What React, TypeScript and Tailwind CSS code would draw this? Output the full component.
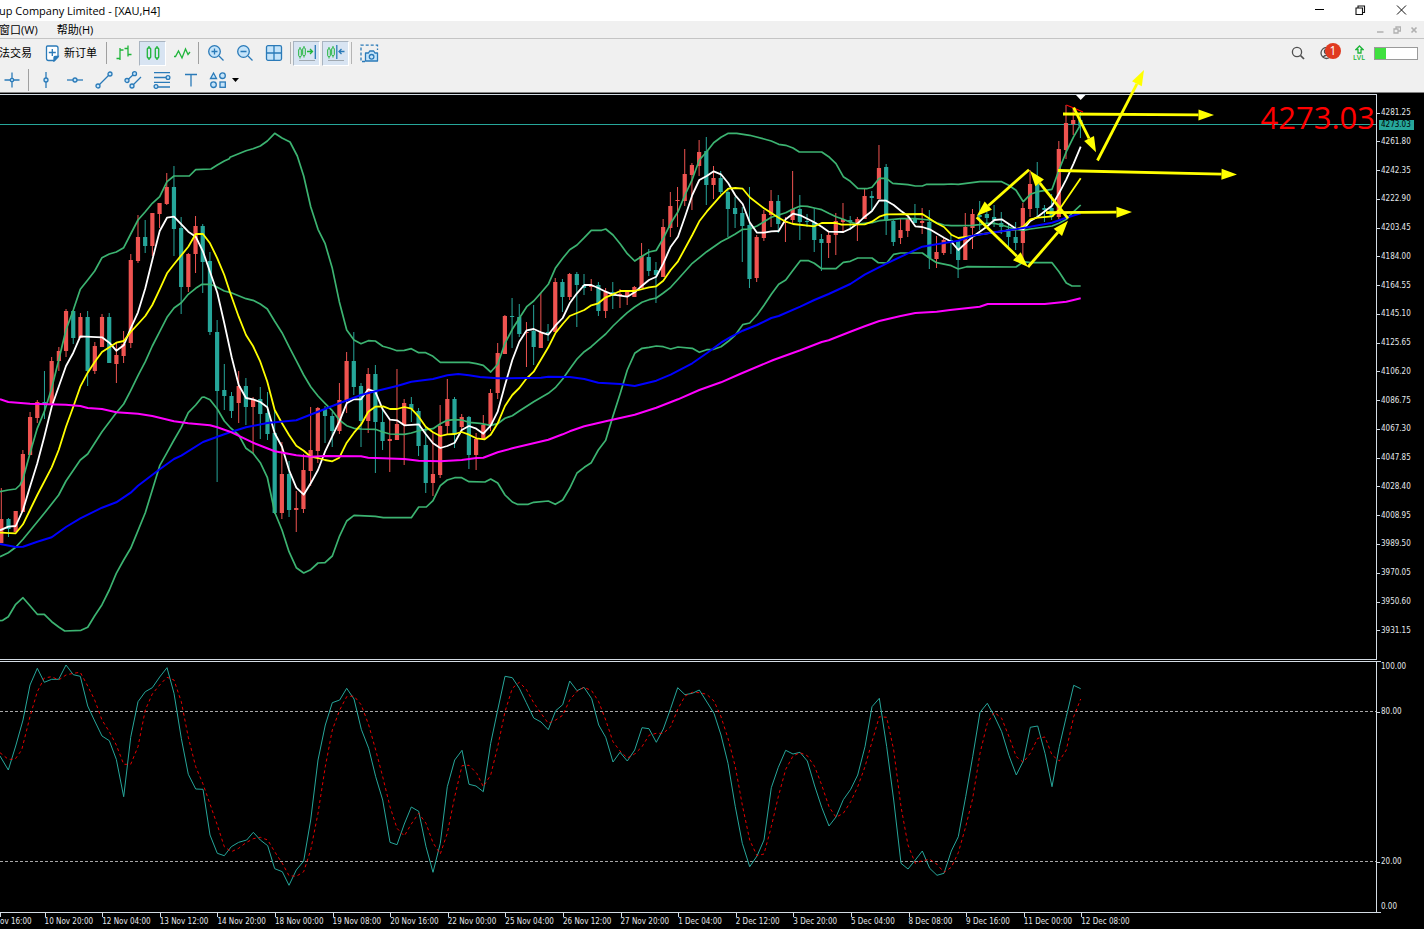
import React from "react";

/* ---------- chart data ---------- */

const PLOT_W = 1376;
const FIRST_X = 1.3;
const STEP = 7.194;

type Candle = [high: number, top: number, bottom: number, low: number, up: 0 | 1];

const candles: Candle[] = [
  [488, 519, 543, 543, 1], [518, 519, 529, 537, 0], [511, 511, 532, 532, 1], [450, 454, 512, 512, 1],
  [412, 417, 455, 455, 1], [400, 402, 418, 423, 1], [371, 402, 404, 419, 0], [357, 361, 404, 404, 1],
  [347, 351, 361, 371, 1], [309, 311, 351, 357, 1], [310, 311, 338, 344, 0], [313, 317, 338, 338, 1],
  [311, 317, 371, 386, 0], [342, 346, 371, 374, 1], [314, 317, 347, 347, 1], [313, 317, 363, 363, 0],
  [343, 355, 364, 383, 1], [331, 344, 356, 363, 1], [254, 260, 343, 348, 1], [215, 237, 261, 263, 1],
  [220, 237, 246, 253, 0], [213, 213, 246, 256, 1], [203, 203, 214, 228, 1], [173, 187, 204, 205, 1],
  [166, 187, 229, 256, 0], [217, 228, 287, 314, 0], [253, 254, 287, 292, 1], [216, 226, 254, 273, 1],
  [224, 226, 262, 293, 0], [252, 261, 332, 335, 0], [320, 332, 391, 482, 0], [364, 390, 396, 410, 0],
  [392, 396, 411, 418, 0], [371, 386, 403, 423, 1], [378, 386, 407, 425, 0], [397, 399, 407, 453, 1],
  [387, 399, 414, 439, 0], [392, 413, 434, 440, 0], [410, 433, 513, 514, 0], [442, 474, 513, 519, 1],
  [461, 474, 510, 517, 0], [491, 508, 510, 532, 1], [454, 470, 509, 513, 1], [407, 450, 471, 486, 1],
  [407, 408, 451, 463, 1], [406, 409, 416, 443, 0], [412, 416, 431, 447, 0], [383, 400, 431, 434, 1],
  [352, 361, 400, 413, 1], [332, 361, 387, 395, 0], [383, 386, 421, 447, 0], [368, 374, 421, 433, 1],
  [365, 374, 422, 473, 0], [410, 422, 441, 450, 0], [420, 439, 441, 472, 1], [369, 424, 440, 440, 1],
  [399, 403, 425, 465, 1], [397, 404, 409, 422, 0], [408, 411, 446, 456, 0], [427, 445, 483, 493, 0],
  [433, 474, 483, 496, 1], [405, 426, 475, 478, 1], [379, 399, 426, 435, 1], [397, 399, 435, 448, 0],
  [414, 417, 427, 433, 1], [416, 417, 455, 469, 0], [433, 439, 455, 470, 1], [415, 425, 439, 439, 1],
  [389, 393, 426, 431, 1], [343, 353, 393, 399, 1], [315, 316, 354, 354, 1], [298, 316, 317, 348, 0],
  [304, 317, 334, 337, 0], [322, 332, 333, 367, 1], [305, 331, 347, 365, 0], [293, 332, 348, 348, 1],
  [324, 332, 333, 341, 0], [278, 282, 332, 332, 1], [279, 282, 297, 312, 0], [273, 274, 297, 300, 1],
  [272, 274, 285, 327, 0], [274, 285, 288, 295, 0], [279, 285, 287, 291, 1], [282, 285, 311, 316, 0],
  [288, 292, 311, 318, 1], [282, 292, 296, 309, 0], [289, 294, 296, 308, 1], [291, 292, 297, 305, 1],
  [286, 287, 297, 297, 1], [243, 256, 288, 288, 1], [249, 257, 271, 276, 0], [262, 270, 275, 303, 0],
  [219, 227, 277, 277, 1], [192, 206, 228, 237, 1], [187, 200, 201, 227, 1], [149, 174, 201, 206, 1],
  [163, 165, 175, 210, 1], [140, 152, 166, 176, 1], [137, 151, 185, 205, 0], [166, 178, 185, 199, 1],
  [171, 178, 192, 194, 0], [188, 192, 209, 237, 0], [197, 208, 214, 228, 0], [207, 213, 226, 262, 0],
  [187, 225, 279, 288, 0], [235, 237, 278, 282, 1], [210, 214, 238, 241, 1], [190, 201, 215, 227, 1],
  [195, 201, 224, 233, 0], [217, 221, 223, 242, 1], [171, 209, 220, 223, 1], [195, 209, 222, 240, 0],
  [214, 221, 222, 227, 0], [208, 222, 240, 252, 0], [234, 239, 243, 271, 0], [232, 235, 243, 258, 1],
  [213, 221, 235, 255, 1], [203, 219, 222, 233, 1], [216, 220, 222, 230, 0], [217, 219, 223, 241, 1],
  [189, 196, 219, 219, 1], [191, 196, 198, 210, 0], [145, 168, 199, 199, 1], [164, 167, 221, 235, 0],
  [220, 221, 242, 246, 0], [219, 230, 238, 244, 1], [217, 219, 231, 237, 1], [204, 218, 223, 223, 0],
  [208, 221, 223, 234, 1], [210, 222, 258, 269, 0], [236, 252, 259, 268, 1], [238, 240, 253, 255, 1],
  [235, 240, 241, 254, 0], [240, 241, 260, 278, 0], [213, 227, 260, 260, 1], [209, 214, 228, 249, 1],
  [201, 215, 217, 230, 0], [212, 214, 218, 223, 0], [205, 217, 220, 227, 0], [212, 223, 227, 234, 0],
  [224, 229, 237, 247, 0], [222, 237, 243, 250, 0], [203, 208, 243, 260, 1], [170, 184, 209, 217, 1],
  [162, 184, 208, 217, 0], [205, 208, 210, 222, 0], [194, 208, 217, 220, 0], [141, 149, 217, 219, 1],
  [105, 123, 150, 159, 1], [108, 120, 124, 135, 1], [112, 120, 126, 138, 0],
];

/* A series is stored as chunks: an origin, then "x,y" offsets in thirds of a unit. */
type Chunk = [ox: number, oy: number, offsets: string];

function points(chunks: Chunk[]): string {
  return chunks
    .map(([ox, oy, offsets]) =>
      offsets
        .split(" ")
        .map((pair) => {
          const [x, y] = pair.split(",").map(Number);
          return `${(ox + x / 3).toFixed(1)},${(oy + y / 3).toFixed(1)}`;
        })
        .join(" ")
    )
    .join(" ");
}

const upperBand: Chunk[] = [
  [0, 260, "0,695 25,690 47,687 60,675 69,657 90,580 112,505 133,455 155,385 176,300"],
  [0, 130, "198,600 220,540 241,478 263,450 284,423 306,383 328,372 349,366 371,353 392,312 414,270 436,245 457,220 479,200 501,155 522,138 568,138 587,119 633,117 652,105 673,93 688,86"],
  [230, 120, "0,112 48,92 69,86 91,78 112,63 134,40 156,54 180,66 202,108 221,168 242,260 264,328 285,370 307,445 328,545 350,630 372,660 393,671 415,662 436,663 458,679 480,685 501,692 523,691 544,686 566,698 587,698 609,709 631,727 717,727 739,731"],
  [480, 120, "10,736 32,756 53,733 75,670 97,628 118,595 140,560 161,543 183,518 205,493 226,445 248,415 269,389 291,375 313,353 334,331 365,331 377,327 399,345 421,372 442,401 464,423 486,409 507,396 529,391 550,355 572,310 594,275 615,225 637,178 658,120 680,95 701,68 723,52 745,40"],
  [730, 120, "20,40 59,46 102,57 124,63 146,73 167,76 189,84 208,96 275,96 296,110 318,131 340,170 361,184 383,205 410,206 426,202 448,175 469,175 488,190 534,194 556,198 577,198 590,193 642,193 664,192"],
  [950, 90, "25,283 89,275 155,275 176,286 198,301 220,335 241,313 263,305 306,298 327,240 349,185 371,140 392,103"],
];

const middleBand: Chunk[] = [
  [0, 260, "0,890 25,878 47,862 69,838 90,812 133,760 176,705 198,663 241,600 263,582 306,515 349,458"],
  [0, 130, "371,822 392,782 414,737 436,695 457,648 479,605 501,562 522,534 544,518 565,493 587,475 606,463 630,463 645,468 673,483"],
  [230, 120, "0,517 48,536 69,541 91,552 112,567 134,604 156,638 177,680 199,722 221,765 242,800 264,828 285,850 307,872 328,900 350,917 372,925 393,927 436,928 458,936 480,942 523,943 544,939 566,932 609,926 631,911 652,901 674,899 695,900 717,907"],
  [480, 120, "0,910 32,916 53,911 75,895 97,887 118,873 161,845 205,820 226,803 248,777 269,747 291,717 313,695 334,680 355,661 377,642 399,618 421,597 442,578 464,561 486,547 507,539 529,534 550,519 572,502 594,478 637,430 680,395 723,365 745,354"],
  [730, 120, "16,342 38,328 59,327 81,318 102,305 124,292 167,278 189,267 211,258 232,259 253,264 275,269 296,280 318,290 340,298 361,307 383,312 404,310 426,308 448,302 491,298 512,296 556,296 599,300 620,308 642,315 664,317"],
  [950, 90, "25,407 68,406 89,404 110,400 133,400 155,405 176,412 198,418 220,421 241,417 306,408 327,400 349,388 371,365 392,345"],
];

const lowerBand: Chunk[] = [
  [0, 260, "0,1082 8,1081 25,1070 47,1033 69,1013 90,1037 112,1063 133,1063 155,1085 176,1101 194,1113 243,1111 263,1102 284,1067 306,1034 328,990 349,940 371,900 392,865 414,812 436,758 457,690 479,617 501,578 522,540 544,502 565,458 587,435 606,412 612,411 630,419 652,447 673,483"],
  [230, 120, "0,922 26,945 48,985 69,1000 91,1028 112,1072 120,1110 134,1177 156,1230 177,1295 199,1343 221,1359 242,1349 264,1329 285,1328 307,1308 328,1250 350,1203 372,1186 436,1189 460,1193 544,1193 566,1161 589,1161 609,1142 631,1097 652,1080 674,1073 695,1073 717,1085"],
  [480, 120, "15,1086 32,1077 53,1089 75,1125 97,1146 112,1153 145,1153 161,1147 205,1143 226,1153 248,1140 269,1105 291,1059 313,1042 334,1028 355,990 377,961 399,888 421,820 442,750 464,700 486,685 507,682 529,678 550,680 572,687 594,681 637,685 658,697 680,689 701,688 723,680 745,664"],
  [730, 120, "16,645 38,614 59,609 81,585 102,556 124,523 146,493 167,480 189,451 211,422 236,422 253,430 275,446 318,446 340,427 361,424 383,414 426,414 445,428 470,429 491,403 512,399 577,399 599,415 620,428 664,437"],
  [950, 90, "25,537 50,530 198,531 220,515 241,518 306,518 327,545 349,579 366,588 392,588"],
];

const fastAverage: Chunk[] = [
  [0, 260, "0,811 25,800 47,798 69,750 90,680 112,610 133,530 155,440 176,380 198,318 220,278 241,229 306,232 328,248 349,272 371,256"],
  [0, 130, "392,595 414,547 436,475 457,390 479,303 501,263 522,260 565,305 587,320 609,365 630,425 652,488 673,580"],
  [230, 120, "5,712 26,795 48,834 69,838 91,846 112,862 134,940 156,980 177,1050 199,1103 221,1124 242,1090 264,1050 285,995 328,905 350,850 372,838 393,838 415,808 436,815 458,868 480,899 501,901 523,916 566,913 587,942 609,970 631,984 652,978 674,968 695,930 717,918 739,926"],
  [480, 120, "10,941 32,917 53,875 75,795 97,720 118,665 140,631 161,627 183,637 205,644 226,617 248,594 269,550 291,520 313,495 334,495 355,504 377,515 399,524 442,530 464,517 486,497 507,480 529,470 550,430 572,380 594,350 615,290 637,225 658,180 680,168 701,154 723,163 745,190"],
  [730, 120, "16,226 38,252 59,307 81,338 102,338 124,334 146,333 167,298 189,281 211,286 253,307 275,320 296,335 340,336 361,326 383,310 404,290 426,273 448,241 469,242 491,255 512,272 534,288 556,319 577,321 599,328 642,353 664,365"],
  [950, 90, "25,480 68,440 110,410 133,390 155,388 198,416 220,418 241,393 263,380 306,347 327,310 349,268 371,220 392,170"],
];

const slowAverage: Chunk[] = [
  [0, 260, "0,818 47,820 69,793 90,750 112,705 155,622 176,570 198,500 220,440 241,380 263,338 284,306 306,276 349,248 371,243"],
  [0, 130, "392,606 436,558 457,525 479,478 501,430 522,403 565,350 587,312 609,312 630,340 652,385 673,435"],
  [230, 120, "0,517 26,590 48,645 69,678 91,725 112,785 134,870 156,910 177,945 199,977 221,992 242,1010 264,1014 285,1020 307,1024 328,1013 350,968 372,938 393,914 415,875 436,860 460,859 480,867 501,867 523,861 544,866 566,890 587,920 609,937 631,948 652,943 674,942 695,936 717,944 739,955"],
  [480, 120, "14,958 32,944 53,910 75,858 97,825 118,804 140,775 161,755 205,682 226,640 248,612 269,588 313,570 334,556 355,550 377,532 399,523 421,513 464,513 507,502 529,499 550,482 572,450 594,424 637,345 658,304 680,275 723,226 745,206"],
  [730, 120, "16,204 38,206 59,232 102,265 146,293 167,305 189,312 253,319 275,309 318,309 335,314 404,313 426,305 448,290 469,283 577,282 599,296 620,310 642,321 664,344"],
  [950, 90, "25,444 68,438 89,433 198,418 220,410 241,388 263,383 306,379 327,360 392,265"],
];

const longAverage: Chunk[] = [
  [0, 260, "0,852 47,861 69,860 112,845 155,832 198,801 241,775 306,743 349,727 392,698 414,677 479,628 522,597 544,587 609,546 673,523"],
  [230, 120, "0,937 48,922 112,909 199,901 264,875 328,850 393,825 436,814 501,798 544,785 609,777 652,766 685,762 717,766"],
  [480, 120, "0,771 53,775 183,773 205,770 269,771 313,777 355,788 421,792 464,798 529,782 572,764 637,730 680,700 723,668"],
  [730, 120, "0,652 38,632 81,615 124,594 146,588 211,560 253,540 296,522 361,492 404,464 469,431 534,400 577,380 642,369"],
  [950, 90, "25,452 68,437 133,427 198,418 241,410 306,398 349,383 392,370"],
];

const baseAverage: Chunk[] = [
  [0, 260, "0,418 25,426 90,431 198,434 241,438 263,444 306,447 349,457 414,461 457,468 522,484 565,490 630,496 652,502"],
  [230, 120, "0,935 69,968 134,994 199,1006 242,1010 285,1008 393,1009 415,1013 523,1017 566,1022 631,1024 695,1020 739,1014"],
  [480, 120, "10,1013 53,997 97,985 205,959 248,943 269,934 313,919 377,904 464,884 529,863 594,838 658,810 723,787"],
  [730, 120, "30,762 130,720 211,691 275,666 296,661 361,635 404,619 448,603 512,588 556,579 620,575"],
  [950, 90, "0,660 89,650 113,642 284,642 349,635 392,625"],
];

const stochMain: Chunk[] = [
  [0, 650, "0,318 25,360 47,288 69,210 90,105 112,55 133,97 155,88 176,88 198,45 220,74 241,79 263,168 284,213 306,258 328,272 349,328 371,440 392,262 414,155 436,125 457,113 479,81 501,53 522,130 544,265 565,373 587,417 609,418 630,555 652,610 673,617 694,590 716,577 740,570 760,547 781,570 803,587 824,656 847,665 867,706 889,660 911,633 932,510 954,330 976,225 997,158 1019,150 1040,115 1062,147 1084,238 1106,295 1127,380 1148,450 1170,577 1191,584 1213,522 1234,471 1256,484 1278,590 1299,667 1321,580 1342,410 1364,330 1386,301 1407,403"],
  [470, 650, "18,408 40,425 62,280 83,180 105,79 127,83 148,115 169,158 191,204 213,216 235,239 257,182 278,164 299,93 321,122 342,112 365,146 386,225 407,262 429,336 450,307 472,333 494,300 516,233 537,236 559,277 580,237 602,175 623,113 645,134 667,130 688,120 732,190 753,255 774,340 796,470 817,580 839,650 861,618 882,570 904,413 925,352 947,301 969,312 990,307 1012,333 1034,408 1055,472 1077,528 1098,501 1120,449 1142,418 1163,375 1185,290 1206,170 1228,145 1250,290 1271,450 1293,640 1314,657 1336,630 1357,603 1379,655 1401,676"],
  [940, 650, "12,670 34,603 55,560 77,440 98,320 120,187 142,160 163,198 185,245 207,317 229,375 250,333 271,232 293,228 315,310 336,410 358,290 379,200 401,106 422,116"],
];

const stochSignal: Chunk[] = [
  [0, 650, "0,308 25,328 45,328 65,300 90,200 112,125 133,84 155,80 176,90 198,75 220,70 241,67 263,108 284,150 306,210 328,245 349,285 371,343 392,343 414,290 436,180 457,132 479,105 501,82 522,90 544,155 565,262 587,350 609,402 630,462 652,525 673,590 694,605 716,595 738,578 760,566 781,562 803,570 824,605 847,640 867,677 889,679 911,665 932,600 954,490 976,350 997,240 1019,180 1040,140 1062,138 1084,165 1106,225 1127,300 1148,380 1170,470 1191,535 1213,558 1234,522 1256,490 1278,520 1299,578 1321,612 1342,550 1364,440 1386,347 1407,346"],
  [470, 650, "20,370 40,410 62,375 83,290 105,185 127,115 148,97 169,118 191,158 213,190 235,220 257,210 278,196 299,150 321,124 342,112 365,122 386,155 407,210 429,275 450,303 472,324 494,312 516,290 537,256 559,250 580,250 602,230 623,178 645,138 667,127 688,128 710,133 732,153 753,200 774,265 796,350 817,465 839,570 861,617 882,612 904,530 925,440 947,358 969,318 990,308 1012,317 1034,350 1055,405 1077,470 1098,502 1120,490 1142,455 1163,410 1185,350 1206,275 1228,200 1250,202 1271,300 1293,470 1314,585 1336,640 1357,632 1379,628 1401,643"],
  [940, 650, "12,667 34,652 55,608 77,530 98,445 120,310 142,220 163,187 185,205 207,260 229,320 250,337 271,310 293,265 315,261 336,315 358,333 379,300 401,200 422,147"],
];

const arrows: [number, number, number, number][] = [
  [1063, 114, 1214, 115],
  [1073.7, 107.7, 1096, 152.3],
  [1097.5, 160.5, 1144, 70],
  [1058, 170.5, 1237, 174.5],
  [1046, 212.7, 1132, 212],
  [1029, 169.7, 976.7, 216],
  [976.7, 217.3, 1028, 267],
  [1028, 267, 1068, 220.7],
  [1068, 218.3, 1030, 170.7],
];

const prices = Array.from({ length: 19 }, (_, i) => (4281.25 - i * 19.45).toFixed(2));

/* The first label is scrolled half out of view and shows its tail only. */
const dates = [
  "ov 16:00", "10 Nov 20:00", "12 Nov 04:00", "13 Nov 12:00", "14 Nov 20:00",
  "18 Nov 00:00", "19 Nov 08:00", "20 Nov 16:00", "22 Nov 00:00", "25 Nov 04:00",
  "26 Nov 12:00", "27 Nov 20:00", "1 Dec 04:00", "2 Dec 12:00", "3 Dec 20:00",
  "5 Dec 04:00", "8 Dec 08:00", "9 Dec 16:00", "11 Dec 00:00", "12 Dec 08:00",
];

/* ---------- chart drawing ---------- */

function Line({ data, color, width }: { data: Chunk[]; color: string; width: number }) {
  return <polyline points={points(data)} fill="none" stroke={color} strokeWidth={width} strokeLinejoin="round" />;
}

function Arrow({ x1, y1, x2, y2 }: { x1: number; y1: number; x2: number; y2: number }) {
  const len = Math.hypot(x2 - x1, y2 - y1);
  const ux = (x2 - x1) / len;
  const uy = (y2 - y1) / len;
  const bx = x2 - ux * 15.5;
  const by = y2 - uy * 15.5;
  return (
    <g fill="#ffff00" stroke="none">
      <line x1={x1} y1={y1} x2={bx} y2={by} stroke="#ffff00" strokeWidth={2.8} />
      <polygon points={`${x2},${y2} ${bx - uy * 5.5},${by + ux * 5.5} ${bx + uy * 5.5},${by - ux * 5.5}`} />
    </g>
  );
}

function PricePlot() {
  return (
    <svg
      className="relative block h-full w-full overflow-visible"
      viewBox={`0 95 ${PLOT_W} 564`}
      preserveAspectRatio="none"
      role="img"
      aria-label="XAU H4"
    >
      <line x1="0" x2={PLOT_W} y1="124.5" y2="124.5" stroke="#26a69a" />
      {candles.map(([high, top, bottom, low, up], i) => {
        const x = FIRST_X + i * STEP;
        const color = up ? "#ef5350" : "#26a69a";
        return (
          <g key={i}>
            <line x1={x} x2={x} y1={high} y2={low} stroke={color} strokeWidth={1} />
            <rect x={x - 2.1} y={top} width={4.2} height={bottom - top} fill={color} />
          </g>
        );
      })}
      <Line data={upperBand} color="#3cb371" width={1.7} />
      <Line data={middleBand} color="#3cb371" width={1.7} />
      <Line data={lowerBand} color="#3cb371" width={1.7} />
      <Line data={fastAverage} color="#ffffff" width={1.8} />
      <Line data={slowAverage} color="#ffff00" width={1.8} />
      <Line data={longAverage} color="#0000ff" width={2} />
      <Line data={baseAverage} color="#ff00ff" width={2} />
      <polyline points="1066.3,105 1073.7,108 1083,112" fill="none" stroke="#ff0000" strokeWidth={1.2} />
      <polygon points="1076,95 1085.5,95 1080.7,100" fill="#ffffff" />
      {arrows.map(([x1, y1, x2, y2], i) => (
        <Arrow key={i} x1={x1} y1={y1} x2={x2} y2={y2} />
      ))}
    </svg>
  );
}

function StochasticPlot() {
  return (
    <svg
      className="block h-full w-full"
      viewBox={`0 662 ${PLOT_W} 250`}
      preserveAspectRatio="none"
      role="img"
      aria-label="Stochastic"
    >
      <g stroke="#a8a8a8" strokeDasharray="3 2">
        <line x1="0" x2={PLOT_W} y1="711.5" y2="711.5" />
        <line x1="0" x2={PLOT_W} y1="861.5" y2="861.5" />
      </g>
      <Line data={stochMain} color="#26a69a" width={1} />
      <polyline points={points(stochSignal)} fill="none" stroke="#ff0000" strokeWidth={0.9} strokeDasharray="3 3" />
    </svg>
  );
}

function AxisLabel({ children }: { children: React.ReactNode }) {
  return (
    <div className="flex h-[10px] items-center gap-px">
      <span className="h-px w-[3px] bg-[#d4dce4]" />
      <span>{children}</span>
    </div>
  );
}

function PriceAxis() {
  return (
    <div className="relative flex flex-col justify-between pt-[14px] pb-[24px]">
      {prices.map((p) => (
        <AxisLabel key={p}>{p}</AxisLabel>
      ))}
      <span className="absolute top-[26px] left-[2px] h-[10px] w-[35px] bg-[#26a69a] pl-[2px] leading-[10px] text-black">
        4273.03
      </span>
    </div>
  );
}

function StochasticAxis() {
  return (
    <div className="flex flex-col">
      <span className="h-px w-[4px] bg-[#d4dce4]" />
      <span className="pl-[4px] leading-[10px]">100.00</span>
      <span className="grow-[35]" />
      <AxisLabel>80.00</AxisLabel>
      <span className="grow-[140]" />
      <AxisLabel>20.00</AxisLabel>
      <span className="grow-[35]" />
      <span className="pl-[4px] leading-[10px]">0.00</span>
      <span className="h-px w-[4px] bg-[#d4dce4]" />
    </div>
  );
}

function TimeAxis() {
  const span = dates.length * 8 * STEP;
  return (
    <div className="h-[17px] overflow-hidden">
      <div className="-ml-[13px] grid grid-cols-20" style={{ width: `${(span / PLOT_W) * 100}%` }}>
        {dates.map((d) => (
          <div key={d} className="whitespace-nowrap first:pl-[13px]">
            <div className="h-[4px] w-px bg-[#d4dce4]" />
            <div className="leading-[10px]">{d}</div>
          </div>
        ))}
      </div>
    </div>
  );
}

/* ---------- toolbar icons ---------- */

const BLUE = "#2a7ab8";
const FILL = "#c5e4fa";
const GREEN = "#1fb53a";

function Icon({ children, stroke = BLUE, w = 18, h = 18 }: { children: React.ReactNode; stroke?: string; w?: number; h?: number }) {
  return (
    <svg className="block" width={w} height={h} viewBox={`0 0 ${w} ${h}`} fill="none" stroke={stroke} strokeWidth={1.3} aria-hidden="true">
      {children}
    </svg>
  );
}

function ToolButton({ label, active, children }: { label: string; active?: boolean; children: React.ReactNode }) {
  return (
    <button
      type="button"
      aria-label={label}
      className={
        active
          ? "mx-px flex h-[25px] w-[27px] items-center justify-center border border-t-[#a9b4c0] border-r-white border-b-white border-l-[#a9b4c0] bg-[#d8e4f2]"
          : "flex h-[25px] w-[29px] items-center justify-center"
      }
    >
      {children}
    </button>
  );
}

function CandlePair() {
  return (
    <g stroke={GREEN} strokeWidth={1}>
      <path d="M3 3v2M3 12.500v2M7 2v2M7 11.500v2" />
      <rect x="1.700" y="5" width="2.600" height="7.500" rx="0.800" />
      <rect x="5.700" y="4" width="2.600" height="7.500" rx="0.800" />
    </g>
  );
}

function TopTools() {
  return (
    <div className="flex h-[28px] items-center">
      <button type="button" className="-ml-px flex-none whitespace-nowrap text-[11px]">法交易</button>
      <button type="button" className="ml-[13px] flex items-center gap-[4px] whitespace-nowrap text-[11px]">
        <Icon w={15} h={17}>
          <path d="M2.5 1H11Q13 1 13 3V12L9.5 15.5H3.5Q1.5 15.5 1.5 13.500V2Q1.500 1 2.500 1Z" fill="#ffffff" />
          <path d="M13 11.500L9 16V12.500Q9 11.500 10 11.500Z" fill={BLUE} />
          <path d="M7.300 4v7M3.800 7.500h7" />
        </Icon>
        新订单
      </button>
      <span className="ml-[9px] h-[22px] w-px bg-[#a0a0a0]" />
      <span className="w-[2px]" />
      <ToolButton label="Bar chart">
        <Icon stroke={GREEN}>
          <path d="M5 4v12M5 6h3.500M1.500 14.500h3.500M13 1.500v11M9.500 4.500h3.500M13 10.500h3.500" />
        </Icon>
      </ToolButton>
      <ToolButton label="Candlesticks" active>
        <Icon stroke={GREEN}>
          <path d="M5 2v2M5 14v2M13 2v2M13 14v2" />
          <rect x="3.300" y="4" width="3.400" height="10" rx="1" />
          <rect x="11.300" y="4" width="3.400" height="10" rx="1" />
        </Icon>
      </ToolButton>
      <ToolButton label="Line chart">
        <Icon stroke={GREEN}>
          <path d="M1 12.500h1.500l3-5.500 3.500 7 3.500-9 2.500 5.500 2-2.500" />
        </Icon>
      </ToolButton>
      <span className="ml-[2px] h-[22px] w-px bg-[#a0a0a0]" />
      <span className="w-[2px]" />
      <ToolButton label="Zoom in">
        <Icon>
          <circle cx="7.500" cy="7.500" r="5.800" fill={FILL} />
          <path d="M12 12l4.500 4.500M7.500 4.500v6M4.500 7.500h6" />
        </Icon>
      </ToolButton>
      <ToolButton label="Zoom out">
        <Icon>
          <circle cx="7.500" cy="7.500" r="5.800" fill={FILL} />
          <path d="M12 12l4.500 4.500M4.500 7.500h6" />
        </Icon>
      </ToolButton>
      <ToolButton label="Tile windows">
        <Icon>
          <rect x="1.500" y="1.700" width="15" height="14.600" rx="1.500" fill={FILL} />
          <path d="M9 2v14M2 9h14" />
        </Icon>
      </ToolButton>
      <span className="ml-[2px] h-[22px] w-px bg-[#b4b4b4]" />
      <span className="w-px" />
      <ToolButton label="Shift end of chart" active>
        <Icon w={20}>
          <CandlePair />
          <path d="M10 7.500h5.500M13 5l2.500 2.500-2.500 2.500" stroke={GREEN} />
          <path d="M18.300 1v14" />
          <path d="M2 16.500h16" stroke="#a0a8b0" strokeWidth={1} />
        </Icon>
      </ToolButton>
      <ToolButton label="Auto scroll" active>
        <Icon w={20}>
          <CandlePair />
          <path d="M10.800 1v14" />
          <path d="M18.500 7.500h-5.500M15.500 5l-2.500 2.500 2.500 2.500" />
          <path d="M2 16.500h16" stroke="#a0a8b0" strokeWidth={1} />
        </Icon>
      </ToolButton>
      <span className="ml-px h-[22px] w-px bg-[#b4b4b4]" />
      <span className="w-[3px]" />
      <ToolButton label="Screenshot">
        <Icon w={19} h={19}>
          <path d="M5 17.500H1V1.200H17.500V6" strokeDasharray="3 2" />
          <path d="M5.500 9h3l1.200-2h4l1.200 2h2.600v8h-12z" fill={FILL} strokeLinejoin="round" />
          <circle cx="11.600" cy="12.800" r="2.300" />
        </Icon>
      </ToolButton>

      <div className="ml-auto flex items-center pr-[6px]">
        <ToolButton label="Search">
          <Icon stroke="#505050" w={14} h={14}>
            <circle cx="6" cy="6" r="4.600" />
            <path d="M9.500 9.500l3.500 3.500" strokeWidth={1.700} />
          </Icon>
        </ToolButton>
        <button type="button" aria-label="Account, 1" className="relative flex h-[25px] w-[29px] items-center justify-center">
          <Icon stroke="#505050" w={14} h={14}>
            <circle cx="6.500" cy="7" r="5.500" />
            <circle cx="6.500" cy="5.500" r="2" />
            <path d="M3 11q3.500-3.500 7 0" />
          </Icon>
          <span className="absolute top-[2px] right-0 flex size-[16px] items-center justify-center rounded-full bg-[#e03a20] text-[12px] leading-none text-white">
            1
          </span>
        </button>
        <button type="button" aria-label="LVL" className="ml-[6px] flex w-[24px] flex-col items-center text-[7px] leading-[7px] font-semibold text-[#1fb53a]">
          <Icon stroke={GREEN} w={9} h={9}>
            <path d="M4.500 1L8 4.500H6V8H3V4.500H1Z" />
          </Icon>
          LVL
        </button>
        <span className="ml-[3px] h-[13px] w-[44px] border border-[#9a9a9a] bg-white" role="meter" aria-label="Level" aria-valuenow={25}>
          <span className="block h-full w-1/4 bg-[#40e040]" />
        </span>
      </div>
    </div>
  );
}

function DrawTools() {
  return (
    <div className="flex h-[25px] items-center">
      <span className="-ml-[3px]" />
      <ToolButton label="Crosshair">
        <Icon>
          <path d="M9 1.500v15M1.500 9h15" />
          <circle cx="9" cy="9" r="1.700" fill={FILL} />
        </Icon>
      </ToolButton>
      <span className="ml-[2px] h-[22px] w-px bg-[#a0a0a0]" />
      <span className="w-[2px]" />
      <ToolButton label="Vertical line">
        <Icon>
          <path d="M9 1v16" />
          <circle cx="9" cy="9" r="2" fill={FILL} />
        </Icon>
      </ToolButton>
      <ToolButton label="Horizontal line">
        <Icon>
          <path d="M1 9h16" />
          <circle cx="9" cy="9" r="2" fill={FILL} />
        </Icon>
      </ToolButton>
      <ToolButton label="Trend line">
        <Icon>
          <path d="M3 15L15 3" />
          <circle cx="3" cy="15" r="2" fill={FILL} />
          <circle cx="15" cy="3" r="2" fill={FILL} />
        </Icon>
      </ToolButton>
      <ToolButton label="Channel">
        <Icon>
          <path d="M3 9.500L10 3M8 15l9-9" />
          <circle cx="3" cy="9.500" r="2" fill={FILL} />
          <circle cx="10.500" cy="2.700" r="2" fill={FILL} />
          <circle cx="8" cy="15" r="2" fill={FILL} />
        </Icon>
      </ToolButton>
      <ToolButton label="Fibonacci">
        <Icon>
          <path d="M1 1.700h16M1 6.500h12M1 11.300h16M5 16h12" />
          <circle cx="15" cy="6.500" r="1.900" fill={FILL} />
          <circle cx="3" cy="15.500" r="1.900" fill={FILL} />
        </Icon>
      </ToolButton>
      <ToolButton label="Text">
        <Icon>
          <path d="M3 3.500h12M9 3.500v12" />
        </Icon>
      </ToolButton>
      <button type="button" aria-label="Shapes" className="ml-[4px] flex items-center gap-[5px]">
        <Icon>
          <path d="M4.500 2L7.500 7.500H1.500Z" fill={FILL} />
          <circle cx="13.500" cy="4.700" r="2.800" fill={FILL} />
          <circle cx="4.500" cy="13.700" r="2.800" fill={FILL} />
          <rect x="11" y="11" width="5.300" height="5.300" fill={FILL} />
        </Icon>
        <svg width="7" height="4" viewBox="0 0 7 4" aria-hidden="true">
          <path d="M0 0h7L3.500 4z" fill="#000000" />
        </svg>
      </button>
    </div>
  );
}

function WindowButtons() {
  return (
    <div className="ml-auto flex pr-[2px]">
      <button type="button" aria-label="Minimize" className="flex w-[41px] items-center justify-center">
        <Icon stroke="#000000" w={11} h={11}><path d="M1 4.500h9" strokeWidth={1} /></Icon>
      </button>
      <button type="button" aria-label="Restore" className="flex w-[41px] items-center justify-center">
        <Icon stroke="#111111" w={11} h={11}>
          <path d="M1 3h6.500v6.500H1zM3 3V1h6.500v6.500H7.500" strokeWidth={1.100} />
        </Icon>
      </button>
      <button type="button" aria-label="Close" className="flex w-[41px] items-center justify-center">
        <Icon stroke="#111111" w={11} h={11}><path d="M1 0.500l9 9M10 0.500l-9 9" strokeWidth={1} /></Icon>
      </button>
    </div>
  );
}

function ChartButtons() {
  return (
    <div className="ml-auto flex pr-[2px]">
      <button type="button" aria-label="Minimize chart" className="flex w-[17px] items-center justify-center">
        <Icon stroke="#b0b0b0" w={8} h={8}><path d="M1 6h6.500" strokeWidth={1.500} /></Icon>
      </button>
      <button type="button" aria-label="Restore chart" className="flex w-[17px] items-center justify-center">
        <Icon stroke="#b0b0b0" w={8} h={8}><path d="M1 3h4v4H1zM3 3V1h4.500v4H5" /></Icon>
      </button>
      <button type="button" aria-label="Close chart" className="flex w-[17px] items-center justify-center">
        <Icon stroke="#b0b0b0" w={8} h={8}><path d="M1.500 1.500l5 5M6.500 1.500l-5 5" strokeWidth={1.700} /></Icon>
      </button>
    </div>
  );
}

export default function App() {
  return (
    <div className="flex min-h-screen flex-col overflow-hidden bg-black font-['Open_Sans','Noto_Sans_CJK_SC',sans-serif] text-black">
      <header className="bg-[#f0f0f0]">
        <div className="flex h-[21px] items-stretch bg-white">
          <h1 className="-ml-px self-center text-[11px] leading-[16px] whitespace-nowrap">up Company Limited - [XAU,H4]</h1>
          <WindowButtons />
        </div>
        <nav className="flex h-[18px] items-stretch border-b border-[#c4c4c4] text-[11px] leading-[16px]">
          <button type="button" className="-ml-px whitespace-nowrap">窗口(W)</button>
          <button type="button" className="ml-[19px] whitespace-nowrap">帮助(H)</button>
          <ChartButtons />
        </nav>
        <TopTools />
        <DrawTools />
      </header>

      <main className="grid grid-cols-[1fr_47px] gap-y-px border-t border-[#808080] pt-px font-['DejaVu_Sans_Condensed','Open_Sans',sans-serif] text-[8px] text-[#e4e8ec]">
        <section className="relative h-[566px] border-y border-r border-[#d4dce4]">
          <PricePlot />
          <span className="absolute top-[7px] right-px font-['Open_Sans',sans-serif] text-[31px] leading-[31px] text-[#ff0000]">
            4273.03
          </span>
        </section>
        <PriceAxis />
        <section className="h-[252px] border-y border-r border-[#d4dce4]">
          <StochasticPlot />
        </section>
        <StochasticAxis />
        <div className="-mt-px">
          <TimeAxis />
        </div>
      </main>
    </div>
  );
}
